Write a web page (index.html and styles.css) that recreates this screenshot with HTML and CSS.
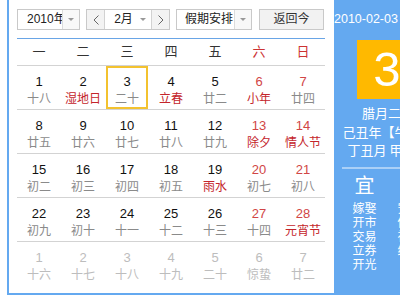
FILE: index.html
```html
<!DOCTYPE html>
<html lang="zh-CN">
<head>
  <meta charset="UTF-8" />
  <title>万年历</title>
  <link rel="stylesheet" href="styles.css">
</head>
<body>
  <div class="calendar">
    <div class="main">
      <div class="toolbar">
        <div class="select year">
          <span class="val">2010年</span>
          <span class="arrow"><i></i></span>
        </div>
        <div class="month-group">
          <span class="nav">
            <svg width="6" height="10" viewBox="0 0 6 10"><polyline points="5.5,0.5 1,5 5.5,9.5" fill="none" stroke="#666" stroke-width="1"/></svg>
          </span>
          <span class="month">
            <span class="val">2月</span>
            <span class="arrow plain"><i></i></span>
          </span>
          <span class="nav">
            <svg width="6" height="10" viewBox="0 0 6 10"><polyline points="0.5,0.5 5,5 0.5,9.5" fill="none" stroke="#666" stroke-width="1"/></svg>
          </span>
        </div>
        <div class="select holiday">
          <span class="val">假期安排</span>
          <span class="arrow"><i></i></span>
        </div>
        <button class="today-btn">返回今</button>
      </div>

      <div class="grid">
        <div class="wd">一</div><div class="wd">二</div><div class="wd">三</div><div class="wd">四</div>
        <div class="wd">五</div><div class="wd we">六</div><div class="wd we">日</div>

        <div class="cell"><div class="d"><b>1</b><span>十八</span></div></div>
        <div class="cell"><div class="d"><b>2</b><span class="fest">湿地日</span></div></div>
        <div class="cell"><div class="d today"><b>3</b><span>二十</span></div></div>
        <div class="cell"><div class="d"><b>4</b><span class="fest">立春</span></div></div>
        <div class="cell"><div class="d"><b>5</b><span>廿二</span></div></div>
        <div class="cell"><div class="d we"><b>6</b><span class="fest">小年</span></div></div>
        <div class="cell"><div class="d we"><b>7</b><span>廿四</span></div></div>

        <div class="cell"><div class="d"><b>8</b><span>廿五</span></div></div>
        <div class="cell"><div class="d"><b>9</b><span>廿六</span></div></div>
        <div class="cell"><div class="d"><b>10</b><span>廿七</span></div></div>
        <div class="cell"><div class="d"><b>11</b><span>廿八</span></div></div>
        <div class="cell"><div class="d"><b>12</b><span>廿九</span></div></div>
        <div class="cell"><div class="d we"><b>13</b><span class="fest">除夕</span></div></div>
        <div class="cell"><div class="d we"><b>14</b><span class="fest">情人节</span></div></div>

        <div class="cell"><div class="d"><b>15</b><span>初二</span></div></div>
        <div class="cell"><div class="d"><b>16</b><span>初三</span></div></div>
        <div class="cell"><div class="d"><b>17</b><span>初四</span></div></div>
        <div class="cell"><div class="d"><b>18</b><span>初五</span></div></div>
        <div class="cell"><div class="d"><b>19</b><span class="fest">雨水</span></div></div>
        <div class="cell"><div class="d we"><b>20</b><span>初七</span></div></div>
        <div class="cell"><div class="d we"><b>21</b><span>初八</span></div></div>

        <div class="cell"><div class="d"><b>22</b><span>初九</span></div></div>
        <div class="cell"><div class="d"><b>23</b><span>初十</span></div></div>
        <div class="cell"><div class="d"><b>24</b><span>十一</span></div></div>
        <div class="cell"><div class="d"><b>25</b><span>十二</span></div></div>
        <div class="cell"><div class="d"><b>26</b><span>十三</span></div></div>
        <div class="cell"><div class="d we"><b>27</b><span>十四</span></div></div>
        <div class="cell"><div class="d we"><b>28</b><span class="fest">元宵节</span></div></div>

        <div class="cell"><div class="d other"><b>1</b><span>十六</span></div></div>
        <div class="cell"><div class="d other"><b>2</b><span>十七</span></div></div>
        <div class="cell"><div class="d other"><b>3</b><span>十八</span></div></div>
        <div class="cell"><div class="d other"><b>4</b><span>十九</span></div></div>
        <div class="cell"><div class="d other"><b>5</b><span>二十</span></div></div>
        <div class="cell"><div class="d other"><b>6</b><span>惊蛰</span></div></div>
        <div class="cell"><div class="d other"><b>7</b><span>廿二</span></div></div>
      </div>
    </div>

    <div class="side">
      <div class="side-date">2010-02-03</div>
      <div class="big-day">3</div>
      <div class="lunar">
        <div>腊月二十</div>
        <div>己丑年【牛年】</div>
        <div>丁丑月 甲午日</div>
      </div>
      <div class="yiji">
        <div class="col">
          <div class="head">宜</div>
          <div>嫁娶</div><div>开市</div><div>交易</div><div>立券</div><div>开光</div>
        </div>
        <div class="col">
          <div class="head">忌</div>
          <div>安葬</div><div>修造</div><div>祈福</div><div>纳采</div>
        </div>
      </div>
    </div>
  </div>
</body>
</html>
```

FILE: styles.css
```css
* { box-sizing: border-box; }
html, body {
  margin: 0; height: 100%;
  overflow: hidden; background: #fff;
}
body {
  font-family: "Liberation Sans", Arial, "Noto Sans CJK SC", sans-serif;
  font-size: 12px; color: #333;
}
.calendar {
  display: flex;
  margin-left: 7px;
  width: 442px; height: 295px;
  border-left: 2px solid #64a9f0;
  border-bottom: 2px solid #64a9f0;
}
.main {
  width: 325px; background: #fff;
  padding: 9px 0 0 8px;
}

/* toolbar */
.toolbar { display: flex; height: 21px; }
.select, .month-group {
  display: flex; height: 21px;
  border: 1px solid #c9c9c9; background: #fff;
}
.val {
  flex: 1; overflow: hidden; white-space: nowrap;
  line-height: 19px; color: #222;
}
.arrow {
  width: 17px; border-left: 1px solid #dcdcdc;
  background: #f8f8f8;
  display: flex; align-items: center; justify-content: center;
}
.arrow.plain { border-left: none; background: #fff; }
.arrow i {
  display: block; width: 0; height: 0;
  border-left: 3px solid transparent;
  border-right: 3px solid transparent;
  border-top: 3px solid #999;
}
.year { width: 63px; margin-right: 6px; }
.year .val { padding-left: 9px; }
.month-group { width: 84px; margin-right: 6px; }
.nav {
  width: 18px; background: #f3f3f3;
  display: flex; align-items: center; justify-content: center;
}
.nav:first-child { border-right: 1px solid #d2d2d2; }
.nav:last-child { border-left: 1px solid #d2d2d2; }
.month { flex: 1; display: flex; }
.month .val { text-align: center; padding-left: 8px; }
.holiday { width: 76px; margin-right: 7px; }
.holiday .val { padding-left: 8px; }
.today-btn {
  width: 65px; height: 21px; padding: 0;
  border: 1px solid #c9c9c9; background: #f2f2f2;
  font: inherit; color: #333; line-height: 19px;
}

/* month grid */
.grid {
  display: grid;
  grid-template-columns: repeat(7, 1fr);
  width: 308px;
  margin-top: 8px;
  border-top: 1px solid #69a5e6;
}
.wd {
  height: 26px; line-height: 26px;
  text-align: center; font-size: 13px; color: #333;
}
.wd.we { color: #c33; }
.cell {
  height: 44px;
  border-top: 1px solid #d3d3d3;
  padding-top: 0;
}
.d {
  width: 42px; height: 43px; margin: 0 auto;
  border: 2px solid transparent;
  padding-top: 6px; text-align: center;
}
.d b {
  display: block; font-weight: normal;
  font-size: 13px; line-height: 16px; color: #111;
}
.d span {
  display: block; white-space: nowrap;
  font-size: 12px; line-height: 18px; color: #8a8a8a;
}
.d.we b { color: #d14545; }
.d span.fest { color: #c4252b; }
.d.today { border-color: #f3c22f; }
.d.other b, .d.other span { color: #bdbdbd; }

/* side panel */
.side {
  width: 108px; background: #64a9f0; color: #fff;
  font-family: "Noto Sans CJK SC", sans-serif;
}
.side-date {
  height: 40px; line-height: 38px;
  font-family: "Liberation Sans", Arial, sans-serif;
  font-size: 12.5px;
}
.big-day {
  width: 60px; height: 59px; margin-left: 23px;
  background: #ffb900; text-align: center;
  font-family: "Liberation Sans", Arial, sans-serif;
  font-size: 49px; line-height: 59px;
}
.lunar {
  margin-top: 5px; text-align: center;
  font-size: 13px; line-height: 18.5px;
  white-space: nowrap;
}
.yiji {
  display: flex;
  margin: 7px 0 0 8px; width: 90px;
  border-top: 2px solid rgba(255,255,255,0.45);
}
.col { width: 45px; text-align: center; font-size: 12px; line-height: 14px; }
.col .head { font-size: 20px; line-height: 32px; }
```
